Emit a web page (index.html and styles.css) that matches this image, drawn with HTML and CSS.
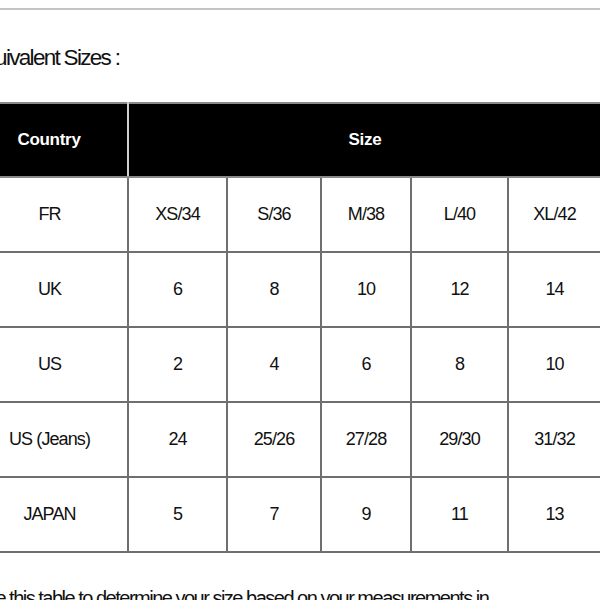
FILE: index.html
```html
<!DOCTYPE html>
<html>
<head>
<meta charset="utf-8">
<link rel="stylesheet" href="styles.css">
</head>
<body>
<div class="rule"></div>
<section class="sizes">
  <h2 class="title">Equivalent Sizes :</h2>
  <table class="chart">
    <colgroup>
      <col class="c-country">
      <col class="c1"><col class="c2"><col class="c3"><col class="c4"><col class="c5">
    </colgroup>
    <thead>
      <tr><th class="h-country">Country</th><th class="h-size" colspan="5">Size</th></tr>
    </thead>
    <tbody>
      <tr><td>FR</td><td>XS/34</td><td>S/36</td><td>M/38</td><td>L/40</td><td>XL/42</td></tr>
      <tr><td>UK</td><td>6</td><td>8</td><td>10</td><td>12</td><td>14</td></tr>
      <tr><td>US</td><td>2</td><td>4</td><td>6</td><td>8</td><td>10</td></tr>
      <tr><td>US (Jeans)</td><td>24</td><td>25/26</td><td>27/28</td><td>29/30</td><td>31/32</td></tr>
      <tr><td>JAPAN</td><td>5</td><td>7</td><td>9</td><td>11</td><td>13</td></tr>
    </tbody>
  </table>
  <p class="note">Use this table to determine your size based on your measurements in</p>
</section>
</body>
</html>
```
FILE: styles.css
```css
html, body {
  margin: 0;
  padding: 0;
  background: #fff;
  overflow: hidden;
}
body {
  font-family: "Liberation Sans", Arial, sans-serif;
  color: #111;
}
.rule {
  height: 2px;
  background: #c4c4c4;
  margin-top: 8px;
}
.sizes {
  margin-left: -30px;
  width: 630px;
}
.title {
  font-weight: normal;
  font-size: 22.5px;
  letter-spacing: -1.7px;
  line-height: 26px;
  margin: 35px 0 0 1px;
}
.chart {
  margin-top: 31px;
  width: 630px;
  border-collapse: collapse;
  table-layout: fixed;
}
.c-country { width: 157px; }
.c1 { width: 99px; }
.c2 { width: 94px; }
.c3 { width: 90px; }
.c4 { width: 97px; }
.c5 { width: 93px; }
.chart th {
  background: #000;
  color: #fff;
  font-weight: bold;
  font-size: 17px;
  letter-spacing: -0.3px;
  height: 72px;
  padding: 0;
  border-top: 2px solid #8a8a8a;
  border-bottom: 2px solid #8a8a8a;
}
.chart th.h-country {
  border-right: 2px solid #cfcfcf;
}
.chart td {
  border: 2px solid #6f6f6f;
  height: 73px;
  padding: 0;
  text-align: center;
  font-size: 18px;
  letter-spacing: -0.9px;
  color: #111;
}
.note {
  font-size: 20px;
  letter-spacing: -1.5px;
  margin: 32px 0 0 4px;
  line-height: 26px;
}
```
